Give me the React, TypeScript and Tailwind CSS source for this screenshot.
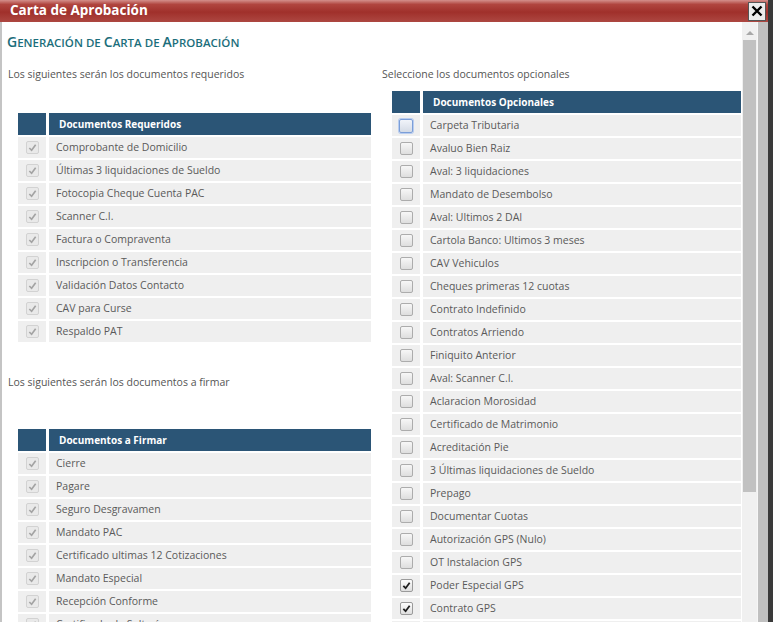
import React from 'react';

type CheckState = 'disabled' | 'off' | 'focus' | 'on';

const requeridos = [
  'Comprobante de Domicilio',
  'Últimas 3 liquidaciones de Sueldo',
  'Fotocopia Cheque Cuenta PAC',
  'Scanner C.I.',
  'Factura o Compraventa',
  'Inscripcion o Transferencia',
  'Validación Datos Contacto',
  'CAV para Curse',
  'Respaldo PAT',
];

const firmar = [
  'Cierre',
  'Pagare',
  'Seguro Desgravamen',
  'Mandato PAC',
  'Certificado ultimas 12 Cotizaciones',
  'Mandato Especial',
  'Recepción Conforme',
  'Certificado de Soltería',
];

const opcionales: { name: string; state: CheckState }[] = [
  { name: 'Carpeta Tributaria', state: 'focus' },
  { name: 'Avaluo Bien Raiz', state: 'off' },
  { name: 'Aval: 3 liquidaciones', state: 'off' },
  { name: 'Mandato de Desembolso', state: 'off' },
  { name: 'Aval: Ultimos 2 DAI', state: 'off' },
  { name: 'Cartola Banco: Ultimos 3 meses', state: 'off' },
  { name: 'CAV Vehiculos', state: 'off' },
  { name: 'Cheques primeras 12 cuotas', state: 'off' },
  { name: 'Contrato Indefinido', state: 'off' },
  { name: 'Contratos Arriendo', state: 'off' },
  { name: 'Finiquito Anterior', state: 'off' },
  { name: 'Aval: Scanner C.I.', state: 'off' },
  { name: 'Aclaracion Morosidad', state: 'off' },
  { name: 'Certificado de Matrimonio', state: 'off' },
  { name: 'Acreditación Pie', state: 'off' },
  { name: '3 Últimas liquidaciones de Sueldo', state: 'off' },
  { name: 'Prepago', state: 'off' },
  { name: 'Documentar Cuotas', state: 'off' },
  { name: 'Autorización GPS (Nulo)', state: 'off' },
  { name: 'OT Instalacion GPS', state: 'off' },
  { name: 'Poder Especial GPS', state: 'on' },
  { name: 'Contrato GPS', state: 'on' },
  { name: 'Seguro GPS', state: 'off' },
];

function Check({ state }: { state: CheckState }) {
  if (state === 'disabled') {
    return (
      <span className="flex h-[13px] w-[13px] items-center justify-center rounded-[2px] border border-[#d2d2d2] bg-[#e9e9e9]">
        <svg width="9" height="9" viewBox="0 0 10 10">
          <path d="M1.5 5.5 L4 8 L8.5 2" fill="none" stroke="#a3a3a3" strokeWidth="1.8" />
        </svg>
      </span>
    );
  }
  if (state === 'on') {
    return (
      <span className="flex h-[13px] w-[13px] items-center justify-center rounded-[2px] border border-[#9a9a9a] bg-gradient-to-b from-[#fdfdfd] to-[#dedede]">
        <svg width="9" height="9" viewBox="0 0 10 10">
          <path d="M1.5 5.5 L4 8 L8.5 2" fill="none" stroke="#1e1e1e" strokeWidth="2" />
        </svg>
      </span>
    );
  }
  if (state === 'focus') {
    return (
      <span className="h-[14px] w-[14px] rounded-[2px] border border-[#7b9ed8] bg-gradient-to-b from-[#f1f4fa] to-[#d4dbe6] shadow-[0_0_0_1px_#b9cdef]" />
    );
  }
  return (
    <span className="h-[13px] w-[13px] rounded-[2px] border border-[#acacac] bg-gradient-to-b from-[#f7f7f7] to-[#dedede]" />
  );
}

function DocTable({
  title,
  rows,
}: {
  title: string;
  rows: { name: string; state: CheckState }[];
}) {
  return (
    <div className="flex flex-col gap-[2px]">
      <div className="flex h-[22px] gap-[3px]">
        <div className="w-[28px] bg-[#2b5576]" />
        <div className="flex flex-1 items-center bg-[#2b5576] pl-[10px] text-[10px] font-bold text-white">
          {title}
        </div>
      </div>
      {rows.map((r) => (
        <div key={r.name} className="flex h-[21px] gap-[3px]">
          <div className="flex w-[28px] items-center justify-center bg-[#efefef]">
            <Check state={r.state} />
          </div>
          <div className="flex flex-1 items-center bg-[#efefef] pl-[7px] text-[10.5px] text-[#5a5a5a]">
            {r.name}
          </div>
        </div>
      ))}
    </div>
  );
}

// hand-made small caps: capital letters large, lowercase letters as small capitals
function SmallCaps({ text }: { text: string }) {
  return (
    <>
      {text.split('').map((c, i) =>
        c !== ' ' && c === c.toUpperCase() ? (
          <span key={i} className="text-[14px]">{c}</span>
        ) : (
          <span key={i} className="text-[11.5px]">{c.toUpperCase()}</span>
        ),
      )}
    </>
  );
}

export default function App() {
  return (
    <div
      className="flex h-[622px] w-[773px] overflow-hidden bg-[#3a3a3a]"
      style={{ fontFamily: '"Open Sans", "Liberation Sans", sans-serif' }}
    >
      <div className="flex w-[768px] flex-col">
        {/* title bar */}
        <div className="flex h-[22px] shrink-0 items-center justify-between bg-[linear-gradient(to_bottom,#d48f8b_0%,#b0453f_20%,#a0302b_55%,#ad4741_100%)] pl-[10px] pr-[2px]">
          <span className="text-[13.5px] font-bold leading-none text-white">Carta de Aprobación</span>
          <div className="flex h-[19px] w-[18px] items-center justify-center border border-[#555] bg-[#ececec]">
            <svg width="12" height="12" viewBox="0 0 12 12">
              <path d="M1.5 1.5 L10.5 10.5 M10.5 1.5 L1.5 10.5" stroke="#000" strokeWidth="2.4" />
            </svg>
          </div>
        </div>

        <div className="flex min-h-0 flex-1 bg-white">
          <div className="w-[2px] bg-[#c4c4c4]" />
          {/* content */}
          <div className="w-[740px] overflow-hidden pl-[5px] pt-[11px]">
            <h2 className="h-[16px] whitespace-pre font-semibold leading-[16px] text-[#1b6e7b]">
              <SmallCaps text="Generación de Carta de Aprobación" />
            </h2>
            <div className="mt-[17px] flex">
              {/* left column */}
              <div className="w-[375px]">
                <p className="pl-[1px] text-[10.5px] leading-[16px] text-[#555]">
                  Los siguientes serán los documentos requeridos
                </p>
                <div className="ml-[11px] mt-[31px] w-[353px]">
                  <DocTable title="Documentos Requeridos" rows={requeridos.map((n) => ({ name: n, state: 'disabled' }))} />
                </div>
                <p className="mt-[32px] pl-[1px] text-[10.5px] leading-[16px] text-[#555]">
                  Los siguientes serán los documentos a firmar
                </p>
                <div className="ml-[11px] mt-[39px] w-[353px]">
                  <DocTable title="Documentos a Firmar" rows={firmar.map((n) => ({ name: n, state: 'disabled' }))} />
                </div>
              </div>
              {/* right column */}
              <div className="w-[360px]">
                <p className="text-[10.5px] leading-[16px] text-[#555]">Seleccione los documentos opcionales</p>
                <div className="ml-[10px] mt-[9px] w-[349px]">
                  <DocTable title="Documentos Opcionales" rows={opcionales} />
                </div>
              </div>
            </div>
          </div>
          {/* scrollbar */}
          <div className="flex w-[15px] flex-col items-center bg-[#f0f0f0]">
            <svg width="8" height="5" viewBox="0 0 8 5" className="mt-[8px]">
              <path d="M0 5 L4 1 L8 5 Z" fill="#a8a8a8" />
            </svg>
            <div className="mt-[5px] h-[452px] w-[13px] bg-[#c1c1c1]" />
          </div>
          <div className="w-[1px] bg-[#f6f6f6]" />
          <div className="w-[10px] bg-[#c0c0c0]" />
        </div>
      </div>
    </div>
  );
}
